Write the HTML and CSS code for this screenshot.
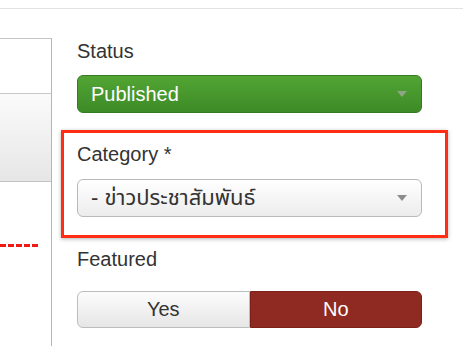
FILE: index.html
```html
<!DOCTYPE html>
<html>
<head>
    <title>Article Options</title>
    <link rel="stylesheet" href="styles.css">
</head>
<body>
    <div class="topbar"></div>
    <div class="layout">
        <div class="sidebar">
            <div class="tab-panel">
                <div class="tab-blank"></div>
                <div class="tab-shaded"></div>
            </div>
            <div class="marker"></div>
        </div>
        <div class="options">
            <div class="field">
                <label class="field-label">Status</label>
                <div class="select select-published">
                    <span>Published</span>
                    <span class="caret"></span>
                </div>
            </div>
            <div class="field highlight">
                <label class="field-label">Category *</label>
                <div class="select">
                    <span class="thai">- ข่าวประชาสัมพันธ์</span>
                    <span class="caret"></span>
                </div>
            </div>
            <div class="field">
                <label class="field-label">Featured</label>
                <div class="toggle-group">
                    <button class="toggle">Yes</button>
                    <button class="toggle toggle-no">No</button>
                </div>
            </div>
        </div>
    </div>
</body>
</html>
```

FILE: styles.css
```css
body {
    margin: 0;
    font-family: "Liberation Sans", Arial, "Noto Sans Thai", "Noto Sans", sans-serif;
    color: #333;
    background: #fff;
    overflow: hidden;
}
.topbar {
    height: 8px;
    border-bottom: 1px solid #e2e2e2;
}
.layout {
    display: flex;
    height: 337px;
}
.sidebar {
    width: 51px;
    border-right: 1px solid #b5b5b5;
    margin-top: 29px;
}
.tab-panel {
    border-top: 1px solid #c4c4c4;
    border-bottom: 1px solid #c4c4c4;
}
.tab-blank {
    height: 54px;
    border-bottom: 1px solid #c8c8c8;
}
.tab-shaded {
    height: 87px;
    background: linear-gradient(#fbfbfb, #e6e6e6);
}
.marker {
    width: 38px;
    margin-top: 62px;
    border-top: 3px dashed #f01a10;
}
.options {
    width: 345px;
    padding-left: 25px;
}
.field-label {
    display: block;
    font-size: 20px;
    line-height: 24px;
}
.field:first-child {
    padding-top: 30px;
}
.select {
    display: flex;
    justify-content: space-between;
    align-items: center;
    box-sizing: border-box;
    height: 38px;
    margin-top: 12px;
    padding: 0 14px 0 13px;
    font-size: 20px;
    border: 1px solid #b9b9b9;
    border-radius: 6px;
    background: linear-gradient(#ffffff, #ececec);
    box-shadow: inset 0 1px 0 #fff;
}
.thai {
    font-size: 22px;
}
.caret {
    width: 0;
    height: 0;
    border-left: 5px solid transparent;
    border-right: 5px solid transparent;
    border-top: 6px solid #8c8c8c;
}
.select-published {
    color: #fff;
    border-color: #357a20;
    background: linear-gradient(#52a533, #3d8a27);
    box-shadow: none;
}
.select-published .caret {
    border-top-color: #8fa486;
}
.highlight {
    margin: 17px -26px 0 -16px;
    padding: 9px 23px 18px 13px;
    border: 3px solid #ff2d14;
    box-shadow: 0 1px 4px rgba(0, 0, 0, 0.3);
}
.highlight .select {
    margin-top: 13px;
}
.highlight + .field {
    padding-top: 9px;
}
.toggle-group {
    display: flex;
    margin-top: 20px;
    height: 37px;
}
.toggle {
    flex: 1;
    font-family: inherit;
    font-size: 20px;
    color: #333;
    border: 1px solid #bdbdbd;
    border-radius: 6px 0 0 6px;
    background: linear-gradient(#fcfcfc, #e6e6e6);
    padding: 0;
}
.toggle-no {
    color: #fff;
    border-color: #7c211a;
    border-radius: 0 6px 6px 0;
    background: #8e2a22;
}
```
